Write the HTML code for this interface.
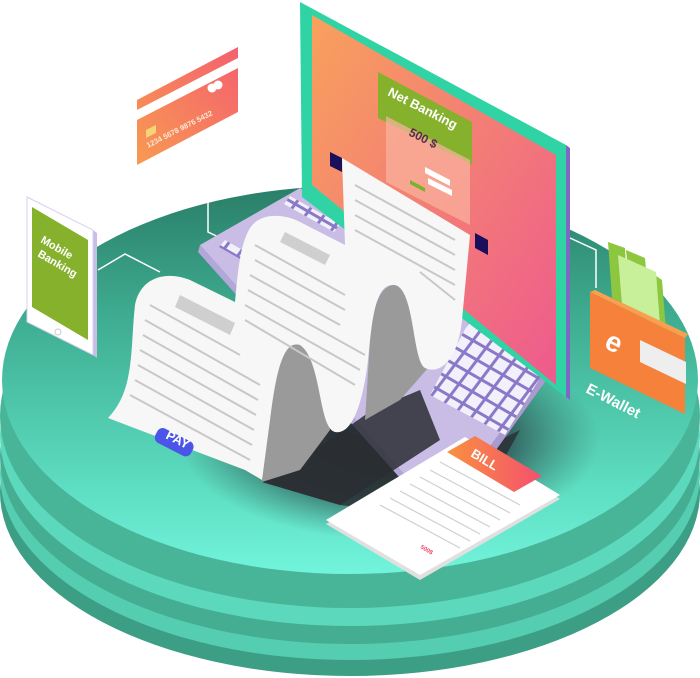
<!DOCTYPE html>
<html><head><meta charset="utf-8"><style>
html,body{margin:0;padding:0;background:#fff;width:700px;height:678px;overflow:hidden}
svg{display:block}
text{font-family:"Liberation Sans",sans-serif;font-weight:bold}
</style></head><body>
<svg width="700" height="678" viewBox="0 0 700 678" xmlns="http://www.w3.org/2000/svg">
<defs>
<linearGradient id="top" x1="0" y1="0" x2="0" y2="1">
<stop offset="0" stop-color="#2a7e68"/><stop offset="0.35" stop-color="#3fae92"/><stop offset="0.8" stop-color="#5fe0c4"/><stop offset="1" stop-color="#72f4dc"/>
</linearGradient>
<linearGradient id="scr" x1="0" y1="0" x2="1" y2="1">
<stop offset="0" stop-color="#f8a15c"/><stop offset="1" stop-color="#ee5a8e"/>
</linearGradient>
<linearGradient id="card" x1="0" y1="1" x2="1" y2="0">
<stop offset="0" stop-color="#f89a50"/><stop offset="1" stop-color="#f46070"/>
</linearGradient>
<linearGradient id="bill" x1="0" y1="0" x2="1" y2="0">
<stop offset="0" stop-color="#f9913f"/><stop offset="1" stop-color="#f4506e"/>
</linearGradient>
<radialGradient id="shadow" cx="0.5" cy="0.5" r="0.5">
<stop offset="0" stop-color="#16161e" stop-opacity="0.95"/><stop offset="0.55" stop-color="#23303a" stop-opacity="0.7"/><stop offset="1" stop-color="#2e5a52" stop-opacity="0"/>
</radialGradient>
<pattern id="keys" width="15" height="15" patternUnits="userSpaceOnUse" patternTransform="matrix(0.87,0.5,-0.6,0.8,0,0)">
<rect width="15" height="15" fill="#8a78c8"/><rect x="1.5" y="1.5" width="12" height="12" fill="#f2f0fa"/>
</pattern>
</defs>
<ellipse cx="350" cy="492" rx="350" ry="184" fill="#3d9e86"/>
<ellipse cx="350" cy="474" rx="350" ry="186" fill="#55cdb0"/>
<ellipse cx="350" cy="456" rx="350" ry="188" fill="#45ad92"/>
<ellipse cx="350" cy="436" rx="350" ry="190" fill="#5cd9bc"/>
<ellipse cx="350" cy="416" rx="350" ry="192" fill="#49b598"/>
<ellipse cx="350" cy="380" rx="348" ry="194" fill="url(#top)"/>
<ellipse cx="390" cy="440" rx="210" ry="100" fill="url(#shadow)"/>
<polygon points="262,482 320,420 440,470 520,430 470,520 340,505" fill="#2a2e32" opacity="0.8"/>
<polyline points="208,165 208,232 225,240" fill="none" stroke="#fff" stroke-width="1.5"/>
<polyline points="98,270 125,254 160,272" fill="none" stroke="#fff" stroke-width="1.5"/>
<polyline points="570,238 596,250 596,288" fill="none" stroke="#fff" stroke-width="1.5"/>
<polygon points="200,245 300,188 568,340 440,515" fill="#c9bde6"/>
<polygon points="440,515 568,340 568,350 442,525" fill="#a99ad0"/>
<polygon points="200,245 440,515 442,525 198,252" fill="#b3a6d8"/>
<polygon points="290,196 340,224 334,232 284,204" fill="url(#keys)"/>
<polygon points="225,240 255,257 249,264 219,247" fill="url(#keys)"/>
<polygon points="470,320 548,365 505,435 430,395" fill="url(#keys)"/>
<polygon points="300,2 566,145 566,397 302,197" fill="#30d3a4"/>
<polygon points="566,145 570,148 570,400 566,397" fill="#7e68c4"/>
<polygon points="312,15 556,155 556,385 312,185" fill="url(#scr)"/>
<polygon points="378,72 472,122 472,165 378,118" fill="#86b12c"/>
<text x="0" y="0" transform="translate(387,95) rotate(27)" font-size="13" fill="#fff">Net Banking</text>
<polygon points="386,116 470,160 470,225 386,182" fill="#f9b3a1" opacity="0.7"/>
<text x="0" y="0" transform="translate(408,135) rotate(27)" font-size="12" fill="#5a2a4a" font-weight="normal">500 $</text>
<polygon points="425,167 450,180 450,186 425,173" fill="#fff"/>
<polygon points="428,178 452,190 452,196 428,184" fill="#fff"/>
<polygon points="410,180 425,188 425,192 410,184" fill="#7ab22a"/>
<polygon points="330,152 342,158 342,172 330,166" fill="#1a0f5a"/>
<polygon points="475,233 488,240 488,255 475,248" fill="#1a0f5a"/>
<polygon points="262,482 330,440 372,410 420,390 440,440 340,505" fill="#2a2e32" opacity="0.85"/>
<path d="M262,482 L268,400 C272,360 285,342 300,345 C318,348 325,380 330,430 L300,470 Z" fill="#9a9a9a"/>
<path d="M365,420 L370,340 C373,305 380,285 395,285 C413,288 420,330 428,368 L400,400 Z" fill="#9a9a9a"/>
<path d="M342,158 L470,235 L462,320 C458,360 440,375 425,368 C412,360 415,290 395,285 C375,282 372,320 368,360 C362,410 350,435 335,432 C318,428 322,360 300,345 C282,338 275,380 270,420 L262,480 L245,470 L108,418 C135,390 130,350 135,305 C140,278 165,270 190,280 L235,302 C238,270 240,245 250,228 C260,212 285,214 300,222 L345,245 Z" fill="#f7f7f7"/>
<g stroke="#c8c8c8" stroke-width="2">
<line x1="355" y1="185" x2="455" y2="240"/><line x1="355" y1="200" x2="455" y2="255"/><line x1="355" y1="215" x2="455" y2="270"/><line x1="355" y1="230" x2="455" y2="285"/><line x1="420" y1="272" x2="455" y2="300"/>
<line x1="255" y1="245" x2="345" y2="295"/><line x1="255" y1="260" x2="345" y2="310"/><line x1="250" y1="275" x2="340" y2="325"/><line x1="248" y1="290" x2="365" y2="355"/><line x1="245" y1="305" x2="360" y2="370"/><line x1="245" y1="320" x2="355" y2="385"/>
<line x1="150" y1="305" x2="240" y2="355"/><line x1="145" y1="320" x2="260" y2="385"/><line x1="143" y1="335" x2="258" y2="400"/><line x1="140" y1="350" x2="256" y2="415"/><line x1="138" y1="365" x2="254" y2="430"/><line x1="135" y1="380" x2="252" y2="445"/><line x1="130" y1="395" x2="250" y2="460"/>
</g>
<polygon points="285,232 330,255 325,265 280,242" fill="#cfcfcf"/>
<polygon points="180,295 235,323 230,335 175,307" fill="#cfcfcf"/>
<rect x="0" y="0" width="40" height="16" rx="6" fill="#4b55e8" transform="translate(160,426) rotate(27)"/>
<text x="0" y="0" transform="translate(165,438) rotate(27)" font-size="13" fill="#fff" font-weight="normal">PAY</text>
<polygon points="326,524 465,441 560,499 420,580" fill="#e0e0e0"/>
<polygon points="326,520 465,437 560,495 420,575" fill="#fff"/>
<polygon points="447,452 475,436 542,476 514,492" fill="url(#bill)"/>
<text x="0" y="0" transform="translate(470,456) rotate(31)" font-size="13" fill="#fff">BILL</text>
<g stroke="#cfcfcf" stroke-width="1.2">
<line x1="440" y1="462" x2="520" y2="505"/><line x1="430" y1="470" x2="510" y2="513"/><line x1="420" y1="477" x2="500" y2="520"/><line x1="410" y1="484" x2="490" y2="527"/><line x1="400" y1="491" x2="480" y2="534"/><line x1="390" y1="498" x2="470" y2="541"/><line x1="380" y1="505" x2="460" y2="548"/>
</g>
<text x="0" y="0" transform="translate(420,548) rotate(31)" font-size="6" fill="#f04a6a">500$</text>
<polygon points="137,100 238,47 238,112 137,165" fill="url(#card)"/>
<polygon points="137,110 238,58 238,68 137,120" fill="#fff"/>
<rect x="0" y="0" width="10" height="8" fill="#f6d57a" transform="translate(146,130) skewY(-27)"/>
<circle cx="212" cy="88" r="4.5" fill="#fff"/><circle cx="218" cy="85" r="4.5" fill="#fff"/>
<text x="0" y="0" transform="translate(148,148) rotate(-27)" font-size="7.5" fill="#fde8d8" font-weight="normal">1234 5678 9876 5432</text>
<polygon points="27,197 93,230 97,233 97,358 93,355" fill="#c8bde6"/>
<polygon points="27,197 93,230 93,355 27,322" fill="#fff" stroke="#d8d0ee"/>
<polygon points="32,207 88,240 88,340 32,307" fill="#86b12c"/>
<text x="0" y="0" transform="translate(40,242) rotate(30)" font-size="11" fill="#fff">Mobile</text>
<text x="0" y="0" transform="translate(37,256) rotate(30)" font-size="11" fill="#fff">Banking</text>
<circle cx="58" cy="332" r="3" fill="none" stroke="#ccc"/>
<g fill="#8dc63f"><polygon points="608,242 625,248 628,305 612,298"/><polygon points="626,250 645,258 650,318 632,310"/><polygon points="640,265 662,280 666,330 645,322"/></g>
<polygon points="618,255 656,272 660,325 622,305" fill="#c8f09a"/>
<polygon points="590,292 685,338 685,414 590,368" fill="#f5813b"/>
<polygon points="590,292 595,290 688,334 685,338" fill="#f9a050"/>
<polygon points="640,340 686,362 686,384 640,362" fill="#eee"/>
<text x="0" y="0" transform="translate(603,347) rotate(27)" font-size="28" fill="#fff">e</text>
<text x="0" y="0" transform="translate(585,392) rotate(27)" font-size="15" fill="#fff" font-weight="normal">E-Wallet</text>
</svg>
</body></html>
